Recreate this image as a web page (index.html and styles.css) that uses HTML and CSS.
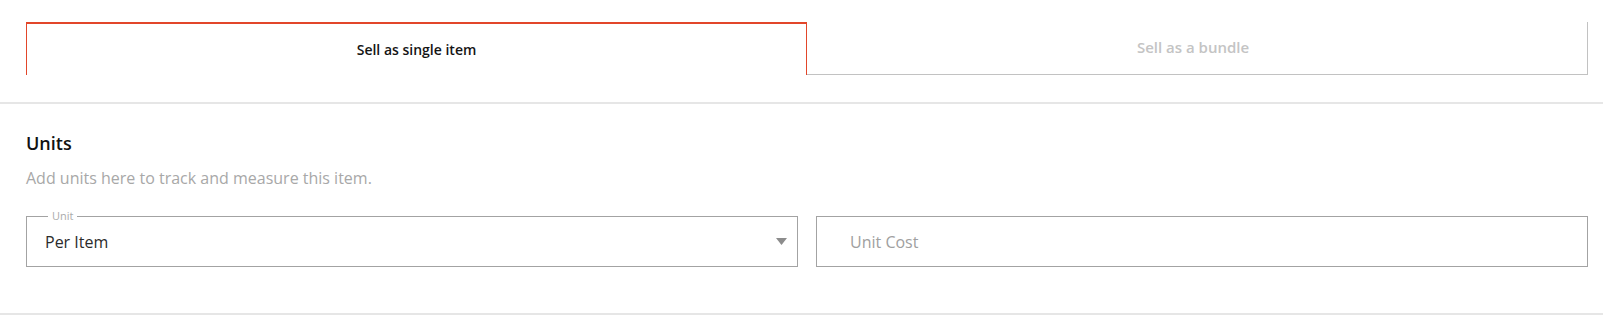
FILE: index.html
```html
<!DOCTYPE html>
<html>
<head>
<meta charset="utf-8">
<link rel="stylesheet" href="styles.css">
</head>
<body>
<div class="tabs">
  <div class="tab tab-active">Sell as single item</div>
  <div class="tab tab-inactive">Sell as a bundle</div>
</div>
<div class="sep"></div>
<section class="units">
  <h2 class="units-title">Units</h2>
  <p class="units-desc">Add units here to track and measure this item.</p>
  <div class="fields">
    <div class="field field-select">
      <span class="field-label">Unit</span>
      <span class="field-value">Per Item</span>
      <svg class="arrow" width="11" height="7" viewBox="0 0 11 7"><path d="M0 0H11L5.5 7Z" fill="#8c8c8c"/></svg>
    </div>
    <div class="field field-input">
      <span class="placeholder">Unit Cost</span>
    </div>
  </div>
</section>
<div class="sep sep-bottom"></div>
</body>
</html>
```
FILE: styles.css
```css
html, body {
  margin: 0;
  padding: 0;
  background: #fff;
}
body {
  font-family: "Open Sans", "Noto Sans", sans-serif;
  color: #1a1a1a;
}
.tabs {
  display: grid;
  grid-template-columns: minmax(0, 1fr) minmax(0, 1fr);
  margin: 22px 15px 0 26px;
  height: 53px;
}
.tab {
  display: flex;
  align-items: center;
  justify-content: center;
  box-sizing: border-box;
}
.tab-active {
  border-top: 2px solid #e2462a;
  border-left: 1px solid #e2462a;
  border-right: 1px solid #e2462a;
  font-size: 14px;
  font-weight: 600;
  color: #151515;
}
.tab-inactive {
  border-right: 1px solid #c2c2c2;
  border-bottom: 1px solid #c2c2c2;
  color: #c4c4c4;
  font-size: 15px;
  font-weight: 600;
  padding: 0 8px 2px 0;
}
.sep {
  height: 2px;
  background: #e6e6e6;
  margin-top: 27px;
}
.units {
  padding: 0 15px 0 26px;
}
.units-title {
  margin: 27px 0 0;
  font-size: 18px;
  font-weight: 600;
  line-height: 24px;
  color: #111;
}
.units-desc {
  margin: 12px 0 0;
  font-size: 16px;
  line-height: 22px;
  color: #a8a8a8;
}
.fields {
  display: grid;
  grid-template-columns: minmax(0, 1fr) minmax(0, 1fr);
  gap: 18px;
  margin-top: 27px;
}
.field {
  position: relative;
  height: 51px;
  box-sizing: border-box;
  border: 1px solid #a3a3a3;
  display: flex;
  align-items: center;
}
.field-select {
  padding: 0 10px 0 18px;
}
.field-input {
  padding: 0 0 0 33px;
}
.field-label {
  position: absolute;
  top: -9px;
  left: 21px;
  padding: 0 4px;
  background: #fff;
  font-size: 11px;
  line-height: 16px;
  color: #ababab;
}
.field-value {
  flex: 1;
  font-size: 16px;
  color: #2b2b2b;
}
.arrow {
  display: block;
}
.placeholder {
  font-size: 16px;
  color: #a0a0a0;
}
.sep-bottom {
  margin-top: 46px;
}
```
